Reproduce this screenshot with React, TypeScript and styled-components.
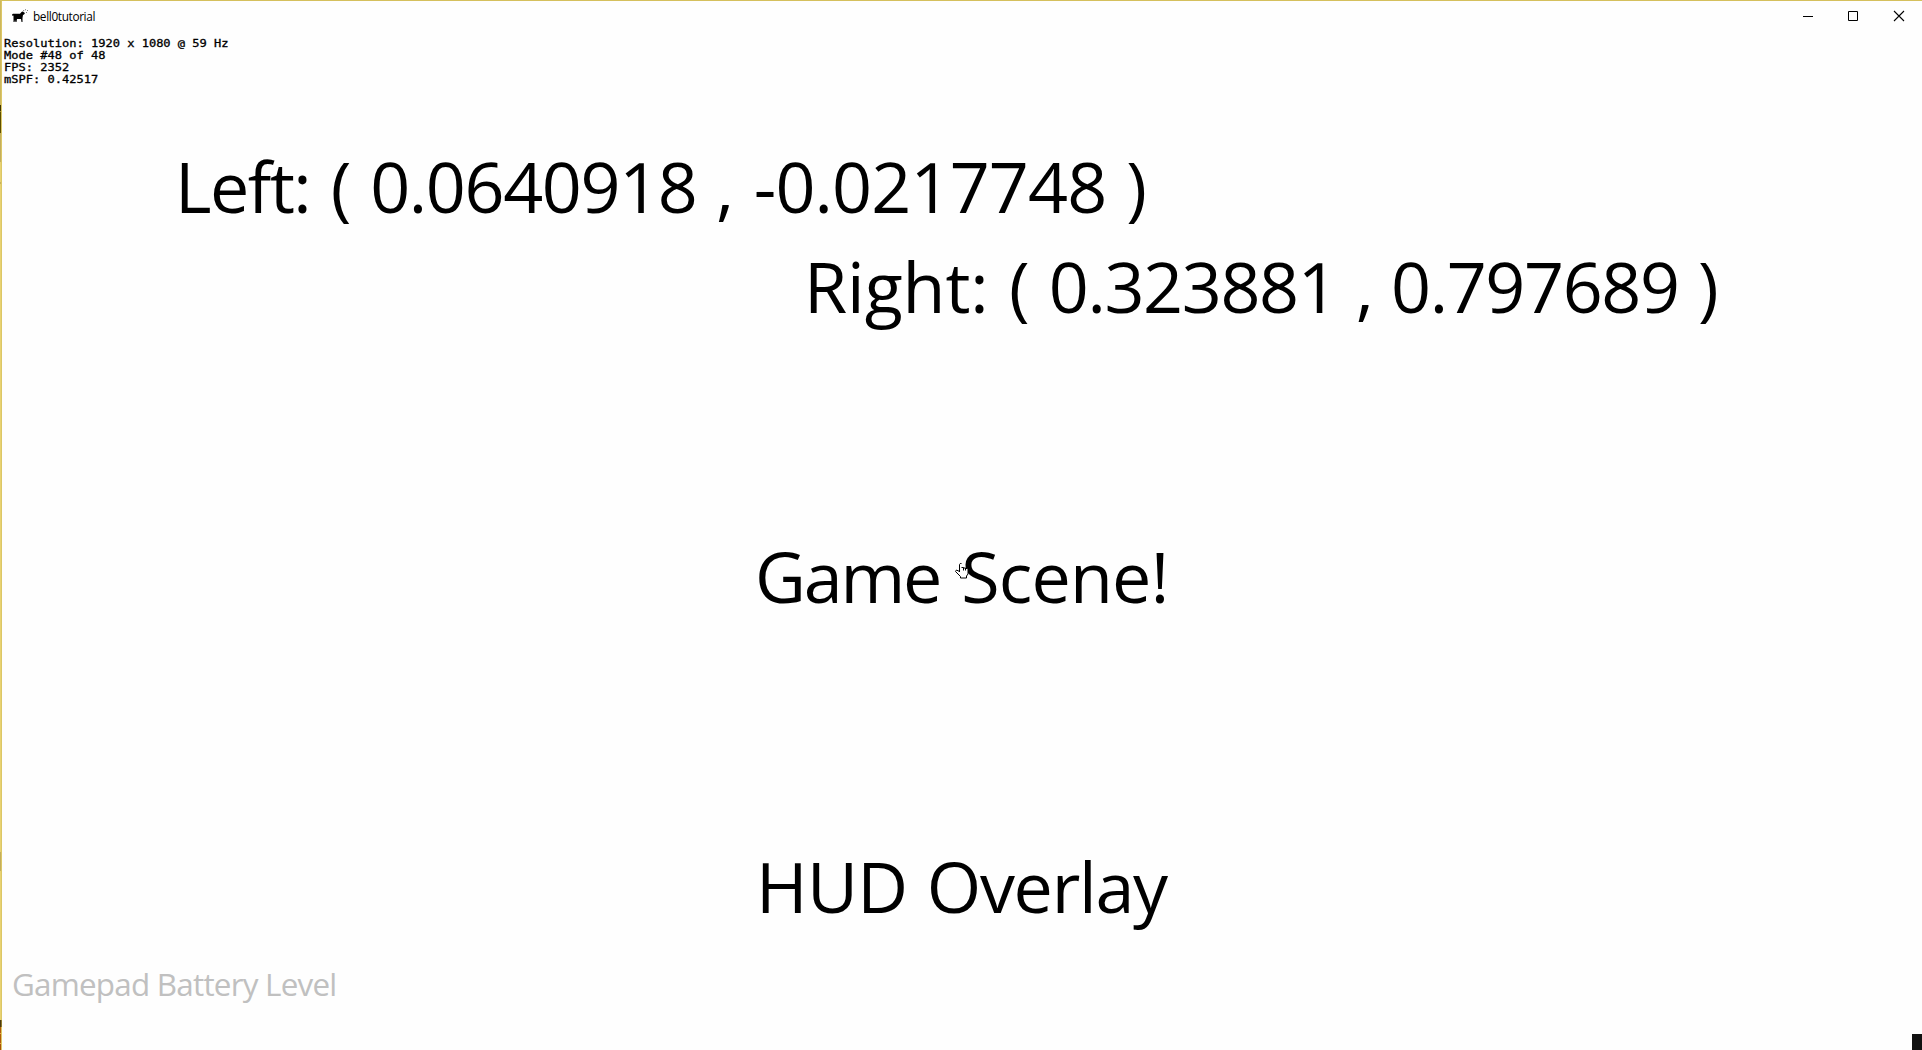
import React from "react";
import styled, { createGlobalStyle } from "styled-components";

const Page = createGlobalStyle`
  html, body { margin: 0; padding: 0; background: #fefefe; overflow: hidden; }
`;

const Window = styled.div`
  position: relative;
  display: grid;
  grid-template-columns: 2px 1fr;
  width: 1922px;
  height: 1050px;
  box-sizing: border-box;
  border-top: 1px solid #d5c05c;
  background: #fefefe;
  overflow: hidden;
`;

const Edge = styled.div`
  display: flex;
  flex-direction: column;
`;

const EdgePart = styled.i<{ $h: number; $c: string; $r?: string }>`
  flex: 0 0 ${(p) => p.$h}px;
  box-sizing: border-box;
  background: ${(p) => p.$c};
  border-right: 1px solid ${(p) => p.$r ?? "#dcc766"};
`;

const Main = styled.div`
  display: flex;
  flex-direction: column;
  min-width: 0;
`;

const TitleBar = styled.header`
  display: flex;
  height: 31px;
  flex: none;
`;

const AppIcon = styled.svg`
  margin: 8px 0 0 10px;
  width: 17px;
  height: 14px;
  flex: none;
`;

const Title = styled.span`
  margin-left: 4px;
  font: 11.8px/31px "Open Sans", "Noto Sans", sans-serif;
  letter-spacing: -0.35px;
  color: #000;
  white-space: pre;
`;

const Controls = styled.div`
  display: flex;
  margin-left: auto;
  margin-right: -1px;
`;

const Control = styled.svg`
  width: 46px;
  height: 30px;
`;

const Stats = styled.div`
  margin: 5px 0 0 2px;
  width: 300px;
  height: 48px;
  flex: none;
  font: 10.4px/12px "DejaVu Sans Mono", monospace;
  transform: scaleX(1.158);
  transform-origin: 0 0;
  -webkit-text-stroke: 0.3px #000;
  color: #000;
  white-space: pre;
`;

const Line = styled.div<{ $top: number; $left: number }>`
  display: flex;
  flex: none;
  gap: 19.7px;
  height: 96px;
  margin: ${(p) => p.$top}px 0 0 ${(p) => p.$left}px;
  font: 70px/96px "Open Sans", "Noto Sans", sans-serif;
  color: #000;
  white-space: pre;
`;

const Word = styled.span<{ $w: number; $ls?: number; $indent?: number }>`
  box-sizing: border-box;
  flex: 0 0 ${(p) => p.$w}px;
  width: ${(p) => p.$w}px;
  padding-left: ${(p) => p.$indent ?? 0}px;
  letter-spacing: ${(p) => p.$ls ?? 0}px;
`;

const Battery = styled.div`
  margin: 28px 0 0 10px;
  font: 31.4px/44px "Open Sans", "Noto Sans", sans-serif;
  letter-spacing: -0.77px;
  color: #c0c0c0;
  white-space: pre;
`;

const Pointer = styled.svg`
  position: absolute;
  left: 954px;
  top: 561px;
  width: 16px;
  height: 18px;
`;

const Corner = styled.div`
  position: absolute;
  right: 0;
  bottom: 0;
  width: 10px;
  height: 16px;
  background: #111;
`;

export default function App() {
  return (
    <>
      <Page />
      <Window>
        <Edge>
          <EdgePart $h={104} $c="#cdb75c" />
          <EdgePart $h={6} $c="#3f3500" />
          <EdgePart $h={1} $c="#a59030" />
          <EdgePart $h={21} $c="#5c4e00" />
          <EdgePart $h={29} $c="#c4ae5c" />
          <EdgePart $h={20} $c="#e8d272" />
          <EdgePart $h={2} $c="#c8b25c" />
          <EdgePart $h={668} $c="#e8d272" />
          <EdgePart $h={19} $c="#c4ae5c" />
          <EdgePart $h={149} $c="#e8d272" />
          <EdgePart $h={7} $c="#4a3a10" $r="#8f7a30" />
          <EdgePart $h={6} $c="#b05a08" />
          <EdgePart $h={1} $c="#e8b040" />
          <EdgePart $h={9} $c="#b05a08" />
          <EdgePart $h={1} $c="#e8b040" />
          <EdgePart $h={6} $c="#a85008" />
        </Edge>
        <Main>
          <TitleBar>
            <AppIcon viewBox="0 0 17 14">
              <path d="M0 5.500L1 4.800H8L9.500 3L10.500 2.500L13 4L12 5.500L11 6L10.500 9V13H9.500L9 10H5L4.500 13H3.500L3 11L2.500 13H1.500L1.500 9L1.500 6.500L.5 7Z" fill="#000" />
              <path d="M11 2.500l1-1.500M13 1l1-.5M14 3.500h1M15 1.500h1" stroke="#555" strokeWidth=".8" />
            </AppIcon>
            <Title>bell0tutorial</Title>
            <Controls>
              <Control viewBox="0 0 46 30">
                <path d="M18 15.5h10" stroke="#000" fill="none" />
              </Control>
              <Control viewBox="0 0 46 30">
                <path d="M17.5 10.5h9v9h-9z" stroke="#000" fill="none" />
              </Control>
              <Control viewBox="0 0 46 30">
                <path d="M17 10l10 10m0-10l-10 10" stroke="#000" strokeWidth="1.1" fill="none" />
              </Control>
            </Controls>
          </TitleBar>
          <Stats>{"Resolution: 1920 x 1080 @ 59 Hz\nMode #48 of 48\nFPS: 2352\nmSPF: 0.42517"}</Stats>
          <Line $top={53} $left={173}>
            <Word $w={134.1} $ls={-1.5}>Left:</Word>
            <Word $w={21.7} $indent={2}>(</Word>
            <Word $w={326.1} $ls={-1.36}>0.0640918</Word>
            <Word $w={15.6}>,</Word>
            <Word $w={354.9} $ls={-0.85} $indent={2.5}>-0.0217748</Word>
            <Word $w={21.7} $indent={0.5}>)</Word>
          </Line>
          <Line $top={4} $left={802}>
            <Word $w={183.7} $ls={-0.1}>Right:</Word>
            <Word $w={21.7} $indent={1.5}>(</Word>
            <Word $w={287.3} $ls={-1.37}>0.323881</Word>
            <Word $w={15.6}>,</Word>
            <Word $w={287.3} $ls={-1.37}>0.797689</Word>
            <Word $w={21.7}>)</Word>
          </Line>
          <Line $top={194} $left={753}>
            <Word $w={185.7} $ls={-2.2}>Game</Word>
            <Word $w={207.9} $ls={-0.8} $indent={0.8}>Scene!</Word>
          </Line>
          <Line $top={214} $left={754}>
            <Word $w={151} $ls={-0.7}>HUD</Word>
            <Word $w={240.3} $ls={-1.25}>Overlay</Word>
          </Line>
          <Battery>Gamepad Battery Level</Battery>
        </Main>
        <Pointer viewBox="0 0 16 18">
          <path d="M5.500 10V2.500q.5-1.500 2-1M7.500 5.500h2v3m0-2.500h2v2.500m0-2h1.500l1 1V12l-1.500 2v2H6.500v-1.500L1.500 9.500l1-1.500 3 1.500" fill="#fff" stroke="#000" />
        </Pointer>
        <Corner />
      </Window>
    </>
  );
}
